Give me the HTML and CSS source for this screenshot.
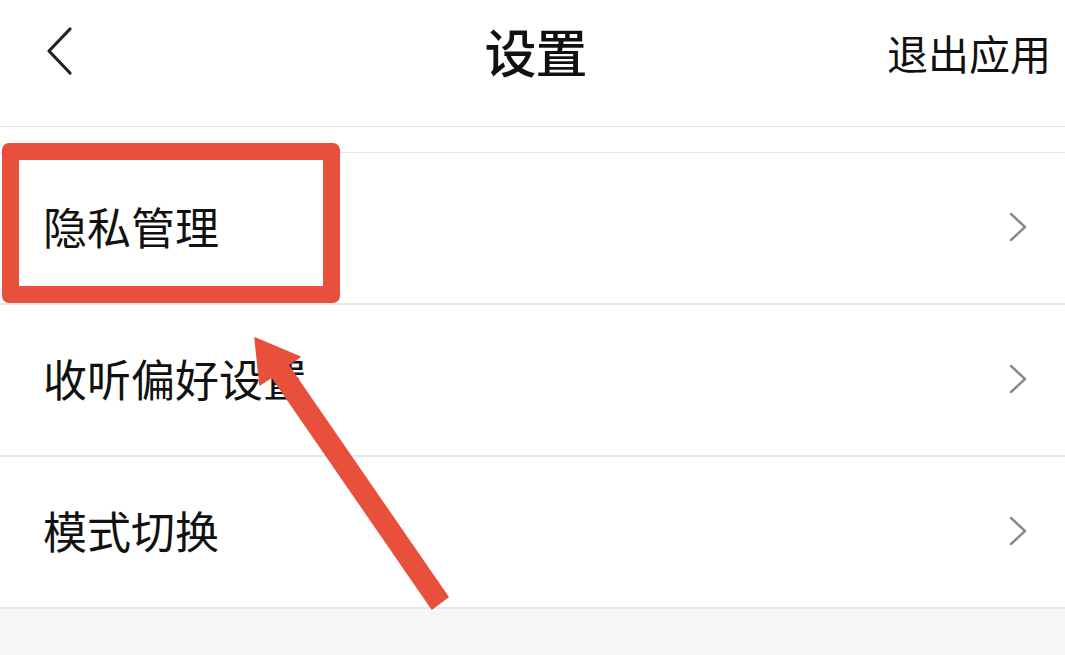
FILE: index.html
```html
<!DOCTYPE html>
<html lang="zh-CN">
<head>
<meta charset="utf-8">
<title>设置</title>
<link rel="stylesheet" href="styles.css">
</head>
<body>
<div class="page">
  <header class="topbar">
    <div class="back">
      <svg width="30" height="50" viewBox="0 0 30 50"><path d="M25 3 L4 25 L25 47" fill="none" stroke="#222" stroke-width="3.2" stroke-linecap="round" stroke-linejoin="round"/></svg>
    </div>
    <h1 class="title">设置</h1>
    <div class="exit">退出应用</div>
  </header>
  <div class="spacer"></div>
  <ul class="list">
    <li class="row"><span class="label">隐私管理</span><svg class="chev" width="18" height="30" viewBox="0 0 18 30"><path d="M2 2 L16 15 L2 28" fill="none" stroke="#8a8a8a" stroke-width="2.4" stroke-linecap="round" stroke-linejoin="round"/></svg></li>
    <li class="row"><span class="label">收听偏好设置</span><svg class="chev" width="18" height="30" viewBox="0 0 18 30"><path d="M2 2 L16 15 L2 28" fill="none" stroke="#8a8a8a" stroke-width="2.4" stroke-linecap="round" stroke-linejoin="round"/></svg></li>
    <li class="row"><span class="label">模式切换</span><svg class="chev" width="18" height="30" viewBox="0 0 18 30"><path d="M2 2 L16 15 L2 28" fill="none" stroke="#8a8a8a" stroke-width="2.4" stroke-linecap="round" stroke-linejoin="round"/></svg></li>
  </ul>
  <div class="footer-bg"></div>

  <div class="highlight"></div>
  <svg class="arrow" width="1065" height="655" viewBox="0 0 1065 655">
    <polygon points="255,338 300,357 288,365 448,597 432,609 272,377 260,385" fill="#e9503b" stroke="#e9503b" stroke-width="1.5" stroke-linejoin="round"/>
  </svg>
</div>
</body>
</html>
```

FILE: styles.css
```css
* { box-sizing: border-box; }
html, body { margin: 0; padding: 0; }
body {
  width: 1065px;
  height: 655px;
  overflow: hidden;
  background: #f5f6f8;
  font-family: "Noto Sans CJK SC", "Noto Sans", sans-serif;
  color: #111;
}
.page {
  position: relative;
  width: 1065px;
  height: 655px;
  display: flex;
  flex-direction: column;
}
.topbar {
  height: 127px;
  flex: none;
  background: #fff;
  border-bottom: 1px solid #e3e3e3;
  display: grid;
  grid-template-columns: 1fr auto 1fr;
  align-items: center;
  padding: 0 14px 24px 14px;
}
.back {
  display: flex;
  align-items: center;
  height: 50px;
  margin-left: 31px;
}
.title {
  margin: 0 0 0 6px;
  font-size: 52px;
  font-weight: 500;
  line-height: 1;
  letter-spacing: -1px;
}
.exit {
  justify-self: end;
  font-size: 41px;
  line-height: 1;
  margin-top: 2px;
}
.spacer {
  height: 26px;
  flex: none;
  background: #fff;
  border-bottom: 1px solid #e6e6e6;
}
.list {
  list-style: none;
  margin: 0;
  padding: 0;
  background: #fff;
  flex: none;
}
.row {
  height: 152px;
  display: flex;
  align-items: center;
  justify-content: space-between;
  padding: 0 38px 0 43px;
  border-bottom: 2px solid #e8e8ea;
}
.label {
  font-size: 44px;
  line-height: 1;
  margin-top: -4px;
}
.chev { display: block; margin-top: -2px; }
.footer-bg { flex: 1; background: #f5f6f8; }

.highlight {
  position: absolute;
  left: 2px;
  top: 143px;
  width: 338px;
  height: 160px;
  border: 17px solid #e9503b;
  border-radius: 7px;
}
.arrow {
  position: absolute;
  left: 0;
  top: 0;
  pointer-events: none;
}
```
